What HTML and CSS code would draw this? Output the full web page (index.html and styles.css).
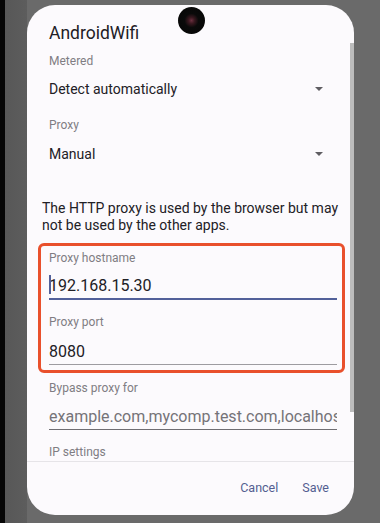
FILE: index.html
```html
<!DOCTYPE html>
<html>
<head>
<meta charset="utf-8">
<link rel="stylesheet" href="styles.css">
</head>
<body>
<div class="screen">
  <div class="dialog">
    <div class="content">
      <h1 class="title">AndroidWifi</h1>
      <div class="label l-metered">Metered</div>
      <div class="select s-metered"><span>Detect automatically</span><span class="arrow"></span></div>
      <div class="label l-proxy">Proxy</div>
      <div class="select s-proxy"><span>Manual</span><span class="arrow"></span></div>
      <p class="note">The HTTP proxy is used by the browser but may not be used by the other apps.</p>
      <div class="highlight">
        <div class="label">Proxy hostname</div>
        <div class="field focused f-host"><span class="caret"></span>192.168.15.30</div>
        <div class="label l-port">Proxy port</div>
        <div class="field f-port">8080</div>
      </div>
      <div class="label l-bypass">Bypass proxy for</div>
      <div class="field placeholder f-bypass">example.com,mycomp.test.com,localhost</div>
      <div class="label l-ip">IP settings</div>
    </div>
    <div class="footer">
      <button class="btn">Cancel</button>
      <button class="btn">Save</button>
    </div>
    <div class="scrollbar"></div>
  </div>
</div>
<div class="camera"></div>
</body>
</html>
```
FILE: styles.css
```css
html, body {
  margin: 0;
  padding: 0;
}
body {
  width: 380px;
  height: 523px;
  overflow: hidden;
  position: relative;
  font-family: Roboto, "Noto Sans", sans-serif;
  background: linear-gradient(90deg, #050505 0, #050505 5px, #575757 5px, #5d5d5d 27px, #6a6a6a 27px, #6a6a6a 100%);
}
.screen {
  padding: 5px 0 0 27px;
}
.dialog {
  width: 327px;
  height: 510px;
  background: #fcfafd;
  border-radius: 28px;
  display: flex;
  flex-direction: column;
  position: relative;
  overflow: hidden;
}
.content {
  flex: none;
  height: 456px;
  overflow: hidden;
  box-sizing: border-box;
  padding: 16px 17px 0 22px;
}
.title {
  margin: 0;
  font-size: 17.5px;
  line-height: 24px;
  font-weight: 400;
  color: #222025;
}
.label {
  font-size: 12px;
  line-height: 16px;
  color: #807d83;
}
.l-metered { margin-top: 8px; }
.l-proxy { margin-top: 18px; }
.l-port { margin-top: 14px; }
.l-bypass { margin-top: 7px; }
.l-ip { margin-top: 14px; }
.select {
  display: flex;
  align-items: center;
  justify-content: space-between;
  height: 20px;
  font-size: 14px;
  line-height: 20px;
  color: #222025;
}
.s-metered { margin-top: 10px; }
.s-proxy { margin-top: 11px; }
.arrow {
  width: 0;
  height: 0;
  border-left: 4.5px solid transparent;
  border-right: 4.5px solid transparent;
  border-top: 4.5px solid #5f5d62;
  margin-right: 14px;
}
.note {
  margin: 36px -8px 0 -7px;
  font-size: 14px;
  line-height: 17px;
  color: #222025;
}
.highlight {
  margin: 9px -8px 0 -11px;
  border: 3px solid #e9502c;
  border-radius: 6px;
  padding: 4px 5px 5px 8px;
}
.field {
  position: relative;
  font-size: 16px;
  line-height: 20px;
  color: #222025;
  white-space: nowrap;
  overflow: hidden;
}
.f-host {
  margin-top: 9.5px;
  padding-bottom: 2.5px;
  border-bottom: 2px solid #52609a;
  overflow: visible;
}
.f-port {
  margin-top: 11.5px;
  padding-bottom: 2.5px;
  border-bottom: 1.5px solid #9d9ba0;
}
.f-bypass {
  margin-top: 10.5px;
  padding-bottom: 2px;
  border-bottom: 1.5px solid #6f6d72;
}
.placeholder {
  color: #757378;
}
.caret {
  position: absolute;
  left: -0.5px;
  top: -0.5px;
  width: 2px;
  height: 19px;
  background: #52609a;
}
.footer {
  flex: 1;
  border-top: 1px solid #e6e4e8;
  display: flex;
  justify-content: flex-end;
  align-items: flex-start;
  gap: 24px;
  padding: 16px 25px 0 0;
}
.btn {
  font-family: Roboto, "Noto Sans", sans-serif;
  font-size: 12.5px;
  line-height: 20px;
  font-weight: 400;
  color: #535e91;
  background: none;
  border: 0;
  padding: 0;
  margin: 0;
}
.scrollbar {
  position: absolute;
  right: 0;
  top: 38px;
  width: 4px;
  height: 369px;
  background: #bcbcbc;
}
.camera {
  position: absolute;
  left: 178px;
  top: 7px;
  width: 27px;
  height: 27px;
  border-radius: 50%;
  background: radial-gradient(circle at 50% 50%, #6a3040 0, #3a1820 3px, #0a0a0a 7px, #050505 100%);
}
```
